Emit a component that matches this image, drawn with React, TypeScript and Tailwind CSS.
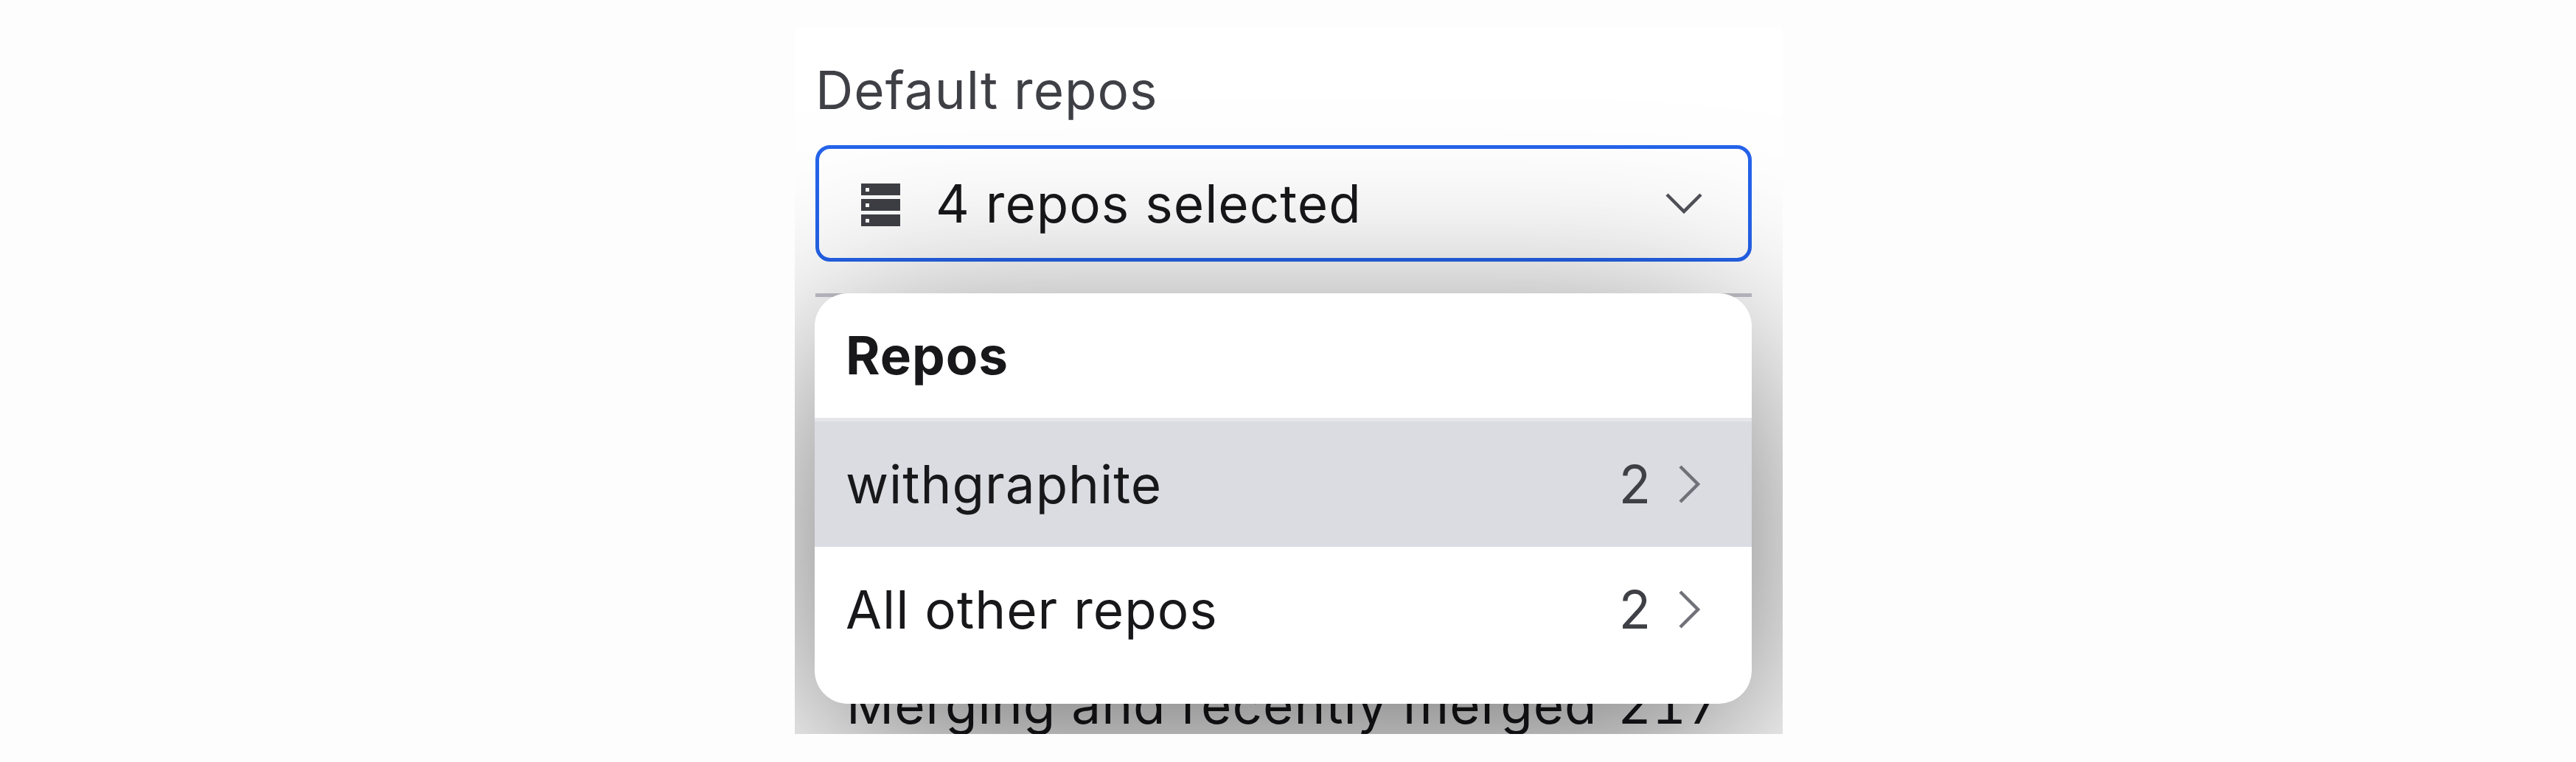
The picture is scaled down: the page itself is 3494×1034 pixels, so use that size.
export default function App() {
  return (
    <div className="h-[1034px] w-[3494px] bg-[#fdfdfd] pt-[37px] pl-[1078px] font-['Inter',sans-serif]">
      <div className="relative h-[959px] w-[1340px] overflow-hidden bg-white">
        <div className="pl-[28px] pt-[46px] tracking-[1px]">
          <div className="text-[71px] leading-[78px] text-[#3f3f46]">Default repos</div>
          <div className="mt-[36px] flex h-[158px] w-[1270px] items-center rounded-[20px] border-[5px] border-[#2563eb] pl-[57px] pr-[62px] text-[71px] text-[#18181b]">
            <svg className="mt-[4px]" width="53" height="58" viewBox="0 0 53 58" fill="#3f3f46">
              <path fillRule="evenodd" d="M0 0h53v16H0zM6 6v5h5V6zM0 21h53v16H0zM6 27v5h5v-5zM0 42h53v16H0zM6 48v5h5v-5z" />
            </svg>
            <span className="ml-[48px] grow">4 repos selected</span>
            <svg width="50" height="28" viewBox="0 0 50 28" fill="none" stroke="#52525b" strokeWidth="4.5">
              <path d="M2 2l23 23L48 2" />
            </svg>
          </div>
          <div className="mt-[43px] h-[5px] w-[1270px] bg-[#c4c4cc]" />
          <div className="mt-[511px] flex w-[1270px] justify-between pl-[42px] pr-[41px] text-[71px] leading-[84px] text-[#18181b]">
            <span>Merging and recently merged</span>
            <span className="tabular-nums">217</span>
          </div>
        </div>
        <div className="absolute left-[27px] top-[361px] h-[557px] w-[1271px] drop-shadow-[0_60px_135px_rgba(0,0,0,0.57)]">
          <div className="h-full overflow-hidden rounded-[45px] bg-white text-[71px] tracking-[1px] text-[#18181b]">
            <div className="flex h-[174px] items-center border-b-[5px] border-[#e5e5ea] pl-[42px] font-bold">
              <span>Repos</span>
            </div>
            <Row label="withgraphite" active />
            <Row label="All other repos" />
          </div>
        </div>
      </div>
    </div>
  );
}

function Row({ label, active }: { label: string; active?: boolean }) {
  return (
    <div className={active ? "flex h-[170px] items-center bg-[#dbdce1] pl-[42px] pr-[70px]" : "flex h-[170px] items-center pl-[42px] pr-[70px]"}>
      <span className="grow">{label}</span>
      <span className="text-[#3f3f46]">2</span>
      <svg className="ml-[36px]" width="30" height="54" viewBox="0 0 30 54" fill="none" stroke="#71717a" strokeWidth="4.5">
        <path d="M3 3l24 24L3 51" />
      </svg>
    </div>
  );
}
